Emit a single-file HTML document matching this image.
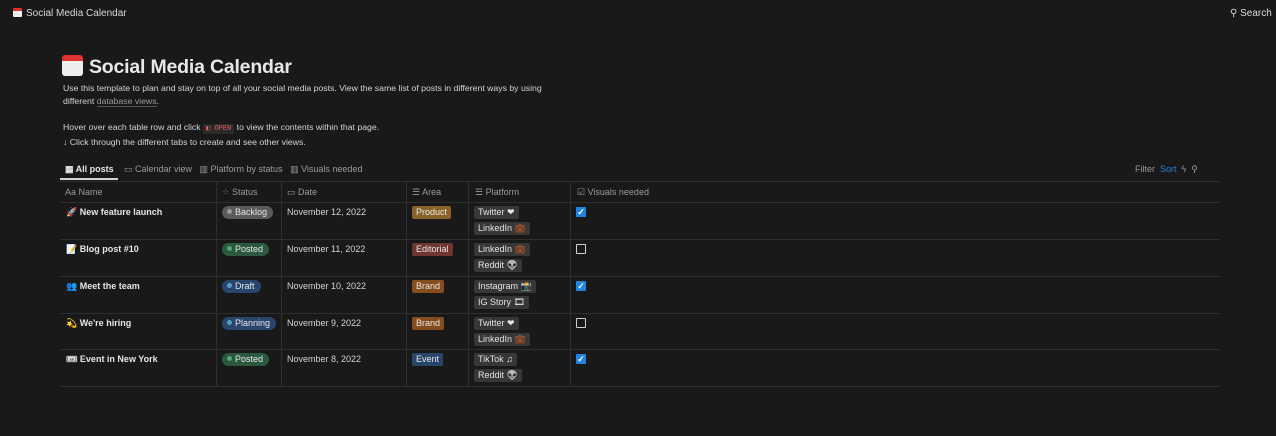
<!DOCTYPE html><html><head><style>
*{box-sizing:border-box;margin:0;padding:0}
body{width:1276px;height:436px;background:#191919;color:#d4d4d4;font-family:"Liberation Sans",sans-serif;font-size:9px;position:relative;overflow:hidden}
.a{position:absolute;white-space:nowrap}
.tag{display:inline-block;padding:1px 4px;border-radius:2px;font-size:9px;line-height:11px;color:#e8e8e8}
.pill{display:inline-block;padding:1px 6px 1px 5px;border-radius:7px;font-size:9px;line-height:11px;color:#e6e6e6}
.dot{display:inline-block;width:5px;height:5px;border-radius:50%;margin-right:3px;vertical-align:1px}
.pl{display:inline-block;background:#373737;padding:1px 4px;border-radius:2px;line-height:11px;color:#e3e3e3}
.cb{position:absolute;width:10px;height:10px;border-radius:1px;color:#fff;font-size:9px;line-height:10px;text-align:center;font-weight:bold}
.on{background:#2383e2}
.off{border:1.4px solid #cfcfcf}
.vl{position:absolute;top:182px;height:204px;width:1px;background:#2e2e2e}
.hl{position:absolute;left:60px;width:1160px;height:1px;background:#2e2e2e}
.nm{font-weight:bold;color:#e6e6e6;font-size:9px}
.h{color:#9b9b9b;font-size:9px}
</style></head><body>
<div class="a" style="left:13px;top:8px;font-size:10px;color:#d8d8d8"><span style="display:inline-block;width:9px;height:9px;background:#eee;border-top:3px solid #d33;border-radius:1px;vertical-align:-1px;margin-right:4px"></span>Social Media Calendar</div>
<div class="a" style="left:1230px;top:8px;font-size:10px;color:#d8d8d8">⚲ Search</div>
<div class="a" style="left:62px;top:55px;font-size:19.5px;font-weight:bold;color:#e8e8e8;letter-spacing:-0.2px"><span style="display:inline-block;width:21px;height:21px;background:#eee;border-top:6px solid #d33;border-radius:3px;vertical-align:-3px;margin-right:6px"></span>Social Media Calendar</div>
<div class="a" style="left:63px;top:82px;font-size:8.7px;line-height:13px;color:#d4d4d4">Use this template to plan and stay on top of all your social media posts. View the same list of posts in different ways by using<br>different <span style="color:#9b9b9b;border-bottom:1px solid #555">database views</span>.</div>
<div class="a" style="left:63px;top:121px;font-size:8.7px;line-height:13px;color:#d4d4d4">Hover over each table row and click <span style="background:#2a2a2a;color:#e05b5b;font-family:'Liberation Mono',monospace;font-size:7px;padding:1px 3px">◧ OPEN</span> to view the contents within that page.<br>↓ Click through the different tabs to create and see other views.</div>
<div class="a" style="left:65px;top:164px;font-size:9px;color:#e6e6e6;font-weight:bold">▦ All posts</div>
<div class="a" style="left:60px;top:178px;width:58px;height:2px;background:#d4d4d4"></div>
<div class="a h" style="left:124px;top:164px;font-size:9px">▭ Calendar view &nbsp; ▥ Platform by status &nbsp; ▥ Visuals needed</div>
<div class="a h" style="left:1135px;top:164px;font-size:9px">Filter &nbsp;<span style="color:#2383e2">Sort</span> &nbsp;ϟ &nbsp;⚲</div>
<div class="hl" style="top:181px"></div>
<div class="hl" style="top:202px"></div><div class="hl" style="top:239px"></div><div class="hl" style="top:276px"></div><div class="hl" style="top:313px"></div><div class="hl" style="top:349px"></div><div class="hl" style="top:386px"></div>
<div class="vl" style="left:216px"></div><div class="vl" style="left:281px"></div><div class="vl" style="left:406px"></div><div class="vl" style="left:468px"></div><div class="vl" style="left:570px"></div>
<div class="a h" style="left:65px;top:187px">Aa Name</div><div class="a h" style="left:222px;top:187px">⁘ Status</div><div class="a h" style="left:287px;top:187px">▭ Date</div><div class="a h" style="left:412px;top:187px">☰ Area</div><div class="a h" style="left:475px;top:187px">☰ Platform</div><div class="a h" style="left:577px;top:187px">☑ Visuals needed</div>

<div class="a nm" style="left:66px;top:207px">🚀 New feature launch</div>
<div class="a" style="left:222px;top:206px"><span class="pill" style="background:#5a5a5a"><span class="dot" style="background:#9b9b9b"></span>Backlog</span></div>
<div class="a" style="left:287px;top:207px">November 12, 2022</div>
<div class="a" style="left:412px;top:206px"><span class="tag" style="background:#89632a">Product</span></div>
<div class="a" style="left:474px;top:206px"><span class="pl">Twitter ❤</span></div><div class="a" style="left:474px;top:222px"><span class="pl">LinkedIn 💼</span></div>
<div class="cb on" style="left:576px;top:207px">✓</div>

<div class="a nm" style="left:66px;top:244px">📝 Blog post #10</div>
<div class="a" style="left:222px;top:243px"><span class="pill" style="background:#2b593f"><span class="dot" style="background:#4dab6f"></span>Posted</span></div>
<div class="a" style="left:287px;top:244px">November 11, 2022</div>
<div class="a" style="left:412px;top:243px"><span class="tag" style="background:#6e3630">Editorial</span></div>
<div class="a" style="left:474px;top:243px"><span class="pl">LinkedIn 💼</span></div><div class="a" style="left:474px;top:259px"><span class="pl">Reddit 👽</span></div>
<div class="cb off" style="left:576px;top:244px"></div>

<div class="a nm" style="left:66px;top:281px">👥 Meet the team</div>
<div class="a" style="left:222px;top:280px"><span class="pill" style="background:#28456c"><span class="dot" style="background:#529cca"></span>Draft</span></div>
<div class="a" style="left:287px;top:281px">November 10, 2022</div>
<div class="a" style="left:412px;top:280px"><span class="tag" style="background:#854c1d">Brand</span></div>
<div class="a" style="left:474px;top:280px"><span class="pl">Instagram 📸</span></div><div class="a" style="left:474px;top:296px"><span class="pl">IG Story 🎞</span></div>
<div class="cb on" style="left:576px;top:281px">✓</div>

<div class="a nm" style="left:66px;top:318px">💫 We're hiring</div>
<div class="a" style="left:222px;top:317px"><span class="pill" style="background:#28456c"><span class="dot" style="background:#529cca"></span>Planning</span></div>
<div class="a" style="left:287px;top:318px">November 9, 2022</div>
<div class="a" style="left:412px;top:317px"><span class="tag" style="background:#854c1d">Brand</span></div>
<div class="a" style="left:474px;top:317px"><span class="pl">Twitter ❤</span></div><div class="a" style="left:474px;top:333px"><span class="pl">LinkedIn 💼</span></div>
<div class="cb off" style="left:576px;top:318px"></div>

<div class="a nm" style="left:66px;top:354px">🎟 Event in New York</div>
<div class="a" style="left:222px;top:353px"><span class="pill" style="background:#2b593f"><span class="dot" style="background:#4dab6f"></span>Posted</span></div>
<div class="a" style="left:287px;top:354px">November 8, 2022</div>
<div class="a" style="left:412px;top:353px"><span class="tag" style="background:#28456c">Event</span></div>
<div class="a" style="left:474px;top:353px"><span class="pl">TikTok ♫</span></div><div class="a" style="left:474px;top:369px"><span class="pl">Reddit 👽</span></div>
<div class="cb on" style="left:576px;top:354px">✓</div>
</body></html>
